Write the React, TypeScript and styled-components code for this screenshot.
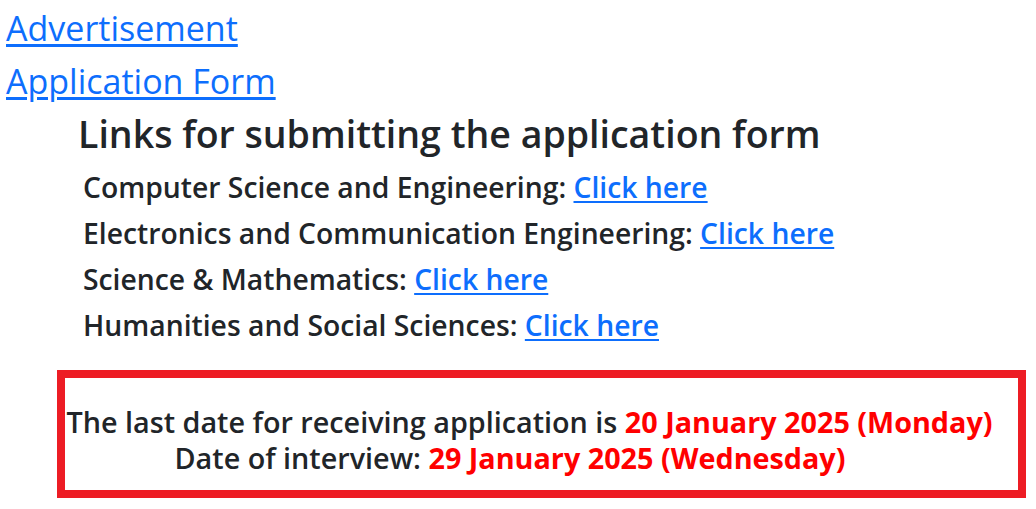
import React from 'react';
import styled, { createGlobalStyle } from 'styled-components';

const GlobalStyle = createGlobalStyle`
  body {
    margin: 0;
    background: #fff;
    font-family: 'Open Sans', 'Liberation Sans', sans-serif;
    color: #212529;
  }
`;

const Page = styled.div`
  padding: 6px 10px 0 6px;
  width: 1036px;
  box-sizing: border-box;
`;

const TopLink = styled.a`
  display: block;
  width: fit-content;
  font-size: 34px;
  line-height: 45px;
  margin-bottom: 8px;
  color: #0d6efd;
  text-decoration: underline;
  text-underline-offset: 3px;
`;

const LinksSection = styled.div`
  padding-left: 72px;
  margin-top: -4px;
`;

const SectionTitle = styled.h2`
  margin: 0 0 4px;
  font-size: 37.5px;
  font-weight: 600;
  line-height: 52px;
`;

const DeptRow = styled.div`
  padding-left: 5px;
  font-size: 28.3px;
  font-weight: 600;
  line-height: 46px;
`;

const BlueLink = styled.a`
  color: #0d6efd;
  text-decoration: underline;
  text-underline-offset: 3px;
`;

const Notice = styled.div`
  margin: 22px 0 0 51px;
  width: 969px;
  box-sizing: border-box;
  border: 8px solid #ed1c24;
  padding: 26px 0 14px;
  font-weight: 600;
  font-size: 28.75px;
  line-height: 36px;
`;

const NoticeLine = styled.div<{ $shift: number }>`
  text-align: center;
  padding-right: ${(p) => p.$shift}px;
`;

const Red = styled.span`
  color: #ff0000;
  font-weight: 700;
`;

const depts = [
  'Computer Science and Engineering',
  'Electronics and Communication Engineering',
  'Science & Mathematics',
  'Humanities and Social Sciences',
];

const App = () => {
  return (
    <>
      <GlobalStyle />
      <Page>
        <TopLink href="#">Advertisement</TopLink>
        <TopLink href="#">Application Form</TopLink>
        <LinksSection>
          <SectionTitle>Links for submitting the application form</SectionTitle>
          {depts.map((d) => (
            <DeptRow key={d}>
              {d}: <BlueLink href="#">Click here</BlueLink>
            </DeptRow>
          ))}
        </LinksSection>
        <Notice>
          <NoticeLine $shift={24}>
            The last date for receiving application is <Red>20 January 2025 (Monday)</Red>
          </NoticeLine>
          <NoticeLine $shift={63}>
            Date of interview: <Red>29 January 2025 (Wednesday)</Red>
          </NoticeLine>
        </Notice>
      </Page>
    </>
  );
};

export default App;
